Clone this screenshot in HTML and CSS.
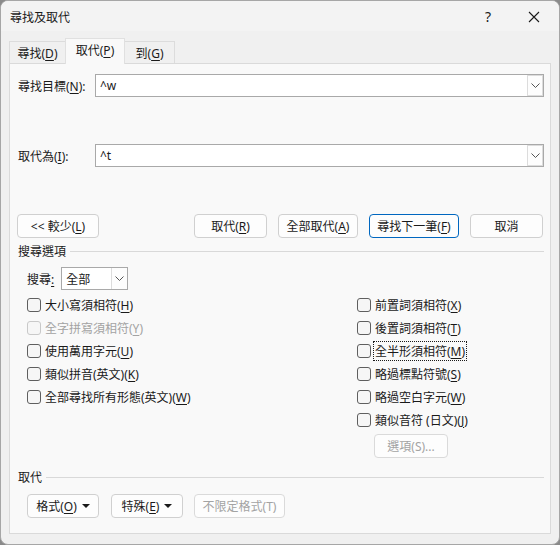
FILE: index.html
```html
<!DOCTYPE html>
<html lang="zh-Hant">

<head>
    <meta charset="UTF-8">
    <title>尋找及取代</title>
    <link rel="stylesheet" href="styles.css">
</head>

<body>
    <div class="dialog">
        <div class="title-bar">
            <span class="title">尋找及取代</span>
            <span class="help">?</span>
            <span class="close">
                <svg width="12" height="12" viewBox="0 0 12 12">
                    <path d="M1 1 L11 11 M11 1 L1 11" stroke="#1a1a1a" stroke-width="1.1" fill="none" />
                </svg>
            </span>
        </div>

        <div class="tabs">
            <div class="tab tab-find"><span>尋找(<u>D</u>)</span></div>
            <div class="tab tab-replace active"><span>取代(<u>P</u>)</span></div>
            <div class="tab tab-goto"><span>到(<u>G</u>)</span></div>
        </div>

        <div class="panel">
            <div class="field-row">
                <label class="field-label">尋找目標(<u>N</u>):</label>
                <div class="combo">
                    <span class="combo-text">^w</span>
                    <span class="combo-arrow">
                        <svg width="9" height="5" viewBox="0 0 9 5"><path d="M0.5 0.5 L4.5 4.5 L8.5 0.5" stroke="#555" fill="none" /></svg>
                    </span>
                </div>
            </div>

            <div class="field-row replace-row">
                <label class="field-label">取代為(<u>I</u>):</label>
                <div class="combo">
                    <span class="combo-text">^t</span>
                    <span class="combo-arrow">
                        <svg width="9" height="5" viewBox="0 0 9 5"><path d="M0.5 0.5 L4.5 4.5 L8.5 0.5" stroke="#555" fill="none" /></svg>
                    </span>
                </div>
            </div>

            <div class="button-row">
                <button class="btn btn-less"><span>&lt;&lt; 較少(<u>L</u>)</span></button>
                <div class="button-group">
                    <button class="btn w73"><span>取代(<u>R</u>)</span></button>
                    <button class="btn w80"><span>全部取代(<u>A</u>)</span></button>
                    <button class="btn w90 default"><span>尋找下一筆(<u>F</u>)</span></button>
                    <button class="btn w73"><span>取消</span></button>
                </div>
            </div>

            <div class="section-head first">
                <span>搜尋選項</span>
                <div class="section-line"></div>
            </div>

            <div class="search-row">
                <span class="search-label">搜尋<u>:</u></span>
                <div class="select">
                    <span class="select-text">全部</span>
                    <span class="select-arrow">
                        <svg width="9" height="5" viewBox="0 0 9 5"><path d="M0.5 0.5 L4.5 4.5 L8.5 0.5" stroke="#555" fill="none" /></svg>
                    </span>
                </div>
            </div>

            <div class="options">
                <div class="option-col left">
                    <div class="check-row"><span class="box"></span><span>大小寫須相符(<u>H</u>)</span></div>
                    <div class="check-row disabled"><span class="box"></span><span>全字拼寫須相符(<u>Y</u>)</span></div>
                    <div class="check-row"><span class="box"></span><span>使用萬用字元(<u>U</u>)</span></div>
                    <div class="check-row"><span class="box"></span><span>類似拼音(英文)(<u>K</u>)</span></div>
                    <div class="check-row"><span class="box"></span><span>全部尋找所有形態(英文)(<u>W</u>)</span></div>
                </div>
                <div class="option-col right">
                    <div class="check-row"><span class="box"></span><span>前置詞須相符(<u>X</u>)</span></div>
                    <div class="check-row"><span class="box"></span><span>後置詞須相符(<u>T</u>)</span></div>
                    <div class="check-row"><span class="box"></span><span class="focus">全半形須相符(<u>M</u>)</span></div>
                    <div class="check-row"><span class="box"></span><span>略過標點符號(<u>S</u>)</span></div>
                    <div class="check-row"><span class="box"></span><span>略過空白字元(<u>W</u>)</span></div>
                    <div class="check-row"><span class="box"></span><span>類似音符 (日文)(<u>J</u>)</span></div>
                    <button class="btn btn-options disabled"><span>選項(S)...</span></button>
                </div>
            </div>

            <div class="section-head second">
                <span>取代</span>
                <div class="section-line"></div>
            </div>

            <div class="format-row">
                <button class="btn w72"><span>格式(<u>O</u>)</span><span class="caret"></span></button>
                <button class="btn w72"><span>特殊(<u>E</u>)</span><span class="caret"></span></button>
                <button class="btn w91 disabled"><span>不限定格式(T)</span></button>
            </div>
        </div>
    </div>
</body>

</html>
```

FILE: styles.css
```css
:root {
    --text: #1a1a1a;
    --muted: #a3a3a3;
    --panel: #f9f9f9;
}

html,
body {
    margin: 0;
    padding: 0;
    background-color: #8a8a8a;
}

body {
    width: 560px;
    height: 545px;
    font-family: "Noto Sans", "Noto Sans CJK TC", sans-serif;
    font-size: 12px;
    color: var(--text);
}

u {
    text-decoration-thickness: 1px;
    text-underline-offset: 2px;
}

.dialog {
    width: 560px;
    height: 545px;
    box-sizing: border-box;
    border: 1px solid #a6a6a6;
    border-radius: 8px;
    background-color: #f0f0f0;
    overflow: hidden;
    display: flex;
    flex-direction: column;
}

/* title bar */
.title-bar {
    height: 30px;
    display: flex;
    align-items: center;
    padding-left: 9px;
    background-color: #f3f3f3;
}

.title {
    flex: 1;
    margin-top: 1px;
}

.help {
    font-size: 14px;
    width: 46px;
    text-align: center;
    margin-top: 1px;
}

.close {
    width: 46px;
    display: flex;
    justify-content: center;
    margin-top: 1px;
    padding-right: 2px;
}

/* tabs */
.tabs {
    display: flex;
    align-items: flex-end;
    padding-left: 8px;
    margin-top: 7px;
    height: 25px;
    position: relative;
    z-index: 1;
}

.tab {
    height: 22px;
    box-sizing: border-box;
    border: 1px solid #dcdcdc;
    border-bottom: none;
    background-color: #f0f0f0;
    display: flex;
    align-items: center;
    justify-content: center;
    white-space: nowrap;
}

.tab-find {
    width: 56px;
    border-right: none;
}

.tab-replace {
    width: 60px;
}

.tab-goto {
    width: 50px;
    border-left: none;
}

.tab.active {
    height: 26px;
    padding-bottom: 3px;
    background-color: var(--panel);
    margin-bottom: -1px;
    border-color: #e0e0e0;
}

/* tab page */
.panel {
    margin: 0 8px;
    height: 471px;
    box-sizing: border-box;
    border: 1px solid #dadada;
    background-color: var(--panel);
    padding: 10px 6px 0 8px;
    display: flex;
    flex-direction: column;
}

.field-row {
    display: flex;
    align-items: center;
    height: 23px;
}

.replace-row {
    margin-top: 47px;
}

.field-label {
    width: 77px;
    white-space: nowrap;
}

.combo {
    flex: 1;
    height: 23px;
    box-sizing: border-box;
    border: 1px solid #a9a9a9;
    background-color: #fff;
    display: flex;
    align-items: center;
    padding: 1px;
}

.combo-text {
    flex: 1;
    padding-left: 3px;
}

.combo-arrow,
.select-arrow {
    width: 16px;
    height: 21px;
    margin-right: -1px;
    border: 1px solid #dcdcdc;
    box-sizing: border-box;
    display: flex;
    align-items: center;
    justify-content: center;
    background-color: #fdfdfd;
}

/* buttons */
.btn {
    font-family: inherit;
    font-size: 12px;
    color: var(--text);
    height: 24px;
    padding: 0;
    box-sizing: border-box;
    border: 1px solid #d0d0d0;
    border-radius: 4px;
    background-color: #fdfdfd;
    display: flex;
    align-items: center;
    justify-content: center;
    gap: 5px;
    white-space: nowrap;
}

.btn.default {
    border-color: #0067c0;
}

.btn.disabled {
    color: var(--muted);
    border-color: #dadada;
}

.w72 {
    width: 72px;
}

.w73 {
    width: 73px;
}

.w80 {
    width: 80px;
}

.w90 {
    width: 90px;
}

.w91 {
    width: 91px;
}

.button-row {
    margin-top: 47px;
    display: flex;
    justify-content: space-between;
    margin-left: -1px;
    padding-right: 1px;
}

.btn-less {
    width: 82px;
}

.button-group {
    display: flex;
    gap: 11px;
}

/* section headings with a rule */
.section-head {
    display: flex;
    align-items: center;
    gap: 4px;
    height: 16px;
}

.section-head.first {
    margin-top: 5px;
}

.section-head.second {
    margin-top: 11px;
}

.section-line {
    flex: 1;
    height: 1px;
    background-color: #d9d9d9;
    margin-top: 1px;
}

/* search scope */
.search-row {
    margin-top: 8px;
    display: flex;
    align-items: center;
    padding-left: 9px;
    gap: 7px;
}

.select {
    width: 67px;
    height: 23px;
    box-sizing: border-box;
    border: 1px solid #a9a9a9;
    background-color: #fff;
    display: flex;
    align-items: center;
    padding: 1px;
}

.select-text {
    flex: 1;
    padding-left: 3px;
}

.select-arrow {
    border-top: none;
    border-bottom: none;
    border-right: none;
}

/* checkbox options */
.options {
    margin-top: 3px;
    display: flex;
    padding-left: 9px;
}

.option-col {
    display: flex;
    flex-direction: column;
}

.option-col.left {
    width: 330px;
}

.check-row {
    height: 23px;
    display: flex;
    align-items: center;
    gap: 4px;
    white-space: nowrap;
}

.box {
    width: 14px;
    height: 14px;
    box-sizing: border-box;
    border: 1px solid #5f5f5f;
    border-radius: 3px;
    background-color: #f6f6f6;
}

.check-row.disabled {
    color: var(--muted);
}

.check-row.disabled .box {
    border-color: #c9c9c9;
}

.focus {
    outline: 1px dotted #1a1a1a;
    padding: 0 1px;
    margin-left: -1px;
}

.btn-options {
    width: 74px;
    margin-left: 17px;
    margin-top: 3px;
}

/* replace formatting */
.format-row {
    margin-top: 9px;
    display: flex;
    gap: 12px;
    padding-left: 9px;
}

.format-row .btn:last-child {
    margin-left: -1px;
}

.caret {
    width: 0;
    height: 0;
    border-left: 4px solid transparent;
    border-right: 4px solid transparent;
    border-top: 4px solid #1a1a1a;
}
```
